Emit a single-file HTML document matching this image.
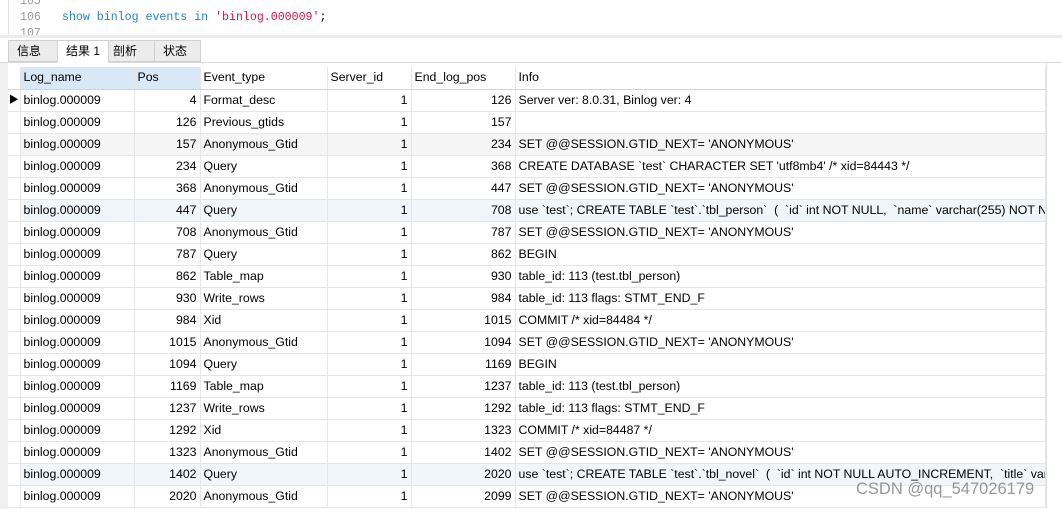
<!DOCTYPE html>
<html><head><meta charset="utf-8"><style>
*{margin:0;padding:0;box-sizing:border-box}
body{width:1062px;height:509px;overflow:hidden;background:#fff;font-family:"Liberation Sans","Noto Sans CJK SC",sans-serif;font-size:12.3px;color:#000;position:relative}
.code{position:absolute;left:0;top:0;width:1062px;height:35px;background:#fff;font-family:"Liberation Mono",monospace;font-size:11.6px}
.ln{position:absolute;left:20px;color:#999}
.gut{position:absolute;left:8px;top:0;width:1px;height:35px;background:#e4e4e4}
.sep{position:absolute;left:0;top:35px;width:1062px;height:3px;background:#ececec}
.tabs{position:absolute;left:0;top:38px;width:1062px;height:25px;background:#fff;border-bottom:1px solid #d8d8d8}
.tab{position:absolute;top:2px;height:22px;background:#ececec;border:1px solid #d0d0d0;font-size:12px;line-height:20px;padding-left:8px}
.tab.a{background:#fff;border-bottom:1px solid #fff;height:23px}
.left{position:absolute;left:0;top:63px;width:8px;height:446px;background:#f0f0f0}
table{position:absolute;left:8px;top:67px;width:1037px;border-collapse:collapse;table-layout:fixed}
td{height:22px;border-right:1px solid #e6e6e6;border-bottom:1px solid #e6e6e6;padding:0 3px;white-space:nowrap;overflow:hidden;line-height:21px}
td.r{text-align:right;padding-right:3px}
tr.h td{background:#fff;border-bottom:1px solid #d4d4d4}
tr.h td.s{background:#d9e8f6}
tr.g td{background:#f5f5f5}
tr.b td{background:#f1f6fb}
td.i{border-right:1px solid #e6e6e6;background:#fff !important;padding:0}
</style></head><body>
<div class="code">
<div class="gut"></div>
<div class="ln" style="top:-5px">105</div>
<div class="ln" style="top:11px">106</div>
<div class="ln" style="top:27px">107</div>
<div style="position:absolute;left:62px;top:11px"><span style="color:#1f7fd8">show binlog events in</span> <span style="color:#e0103c">'binlog.000009'</span>;</div>
</div>
<div class="sep"></div>
<div class="tabs">
<div class="tab" style="left:8px;width:50px">信息</div>
<div class="tab a" style="left:57px;width:52px">结果 1</div>
<div class="tab" style="left:108px;width:47px;padding-left:4px">剖析</div>
<div class="tab" style="left:154px;width:47px">状态</div>
</div>
<div class="left"></div>
<table>
<colgroup><col style="width:12px"><col style="width:114px"><col style="width:66px"><col style="width:127px"><col style="width:84px"><col style="width:104px"><col style="width:530px"></colgroup>
<tr class="h"><td class="i"></td><td class="s">Log_name</td><td class="s">Pos</td><td>Event_type</td><td>Server_id</td><td>End_log_pos</td><td>Info</td></tr>
<tr><td class="i" style="font-size:10px;text-align:center">&#9654;</td><td>binlog.000009</td><td class="r">4</td><td>Format_desc</td><td class="r">1</td><td class="r">126</td><td>Server ver: 8.0.31, Binlog ver: 4</td></tr>
<tr><td class="i"></td><td>binlog.000009</td><td class="r">126</td><td>Previous_gtids</td><td class="r">1</td><td class="r">157</td><td></td></tr>
<tr class="g"><td class="i"></td><td>binlog.000009</td><td class="r">157</td><td>Anonymous_Gtid</td><td class="r">1</td><td class="r">234</td><td>SET @@SESSION.GTID_NEXT= 'ANONYMOUS'</td></tr>
<tr><td class="i"></td><td>binlog.000009</td><td class="r">234</td><td>Query</td><td class="r">1</td><td class="r">368</td><td>CREATE DATABASE `test` CHARACTER SET 'utf8mb4' /* xid=84443 */</td></tr>
<tr><td class="i"></td><td>binlog.000009</td><td class="r">368</td><td>Anonymous_Gtid</td><td class="r">1</td><td class="r">447</td><td>SET @@SESSION.GTID_NEXT= 'ANONYMOUS'</td></tr>
<tr class="b"><td class="i"></td><td>binlog.000009</td><td class="r">447</td><td>Query</td><td class="r">1</td><td class="r">708</td><td>use `test`; CREATE TABLE `test`.`tbl_person`&nbsp; (&nbsp; `id` int NOT NULL,&nbsp; `name` varchar(255) NOT NULL</td></tr>
<tr><td class="i"></td><td>binlog.000009</td><td class="r">708</td><td>Anonymous_Gtid</td><td class="r">1</td><td class="r">787</td><td>SET @@SESSION.GTID_NEXT= 'ANONYMOUS'</td></tr>
<tr><td class="i"></td><td>binlog.000009</td><td class="r">787</td><td>Query</td><td class="r">1</td><td class="r">862</td><td>BEGIN</td></tr>
<tr><td class="i"></td><td>binlog.000009</td><td class="r">862</td><td>Table_map</td><td class="r">1</td><td class="r">930</td><td>table_id: 113 (test.tbl_person)</td></tr>
<tr><td class="i"></td><td>binlog.000009</td><td class="r">930</td><td>Write_rows</td><td class="r">1</td><td class="r">984</td><td>table_id: 113 flags: STMT_END_F</td></tr>
<tr><td class="i"></td><td>binlog.000009</td><td class="r">984</td><td>Xid</td><td class="r">1</td><td class="r">1015</td><td>COMMIT /* xid=84484 */</td></tr>
<tr><td class="i"></td><td>binlog.000009</td><td class="r">1015</td><td>Anonymous_Gtid</td><td class="r">1</td><td class="r">1094</td><td>SET @@SESSION.GTID_NEXT= 'ANONYMOUS'</td></tr>
<tr><td class="i"></td><td>binlog.000009</td><td class="r">1094</td><td>Query</td><td class="r">1</td><td class="r">1169</td><td>BEGIN</td></tr>
<tr><td class="i"></td><td>binlog.000009</td><td class="r">1169</td><td>Table_map</td><td class="r">1</td><td class="r">1237</td><td>table_id: 113 (test.tbl_person)</td></tr>
<tr><td class="i"></td><td>binlog.000009</td><td class="r">1237</td><td>Write_rows</td><td class="r">1</td><td class="r">1292</td><td>table_id: 113 flags: STMT_END_F</td></tr>
<tr><td class="i"></td><td>binlog.000009</td><td class="r">1292</td><td>Xid</td><td class="r">1</td><td class="r">1323</td><td>COMMIT /* xid=84487 */</td></tr>
<tr><td class="i"></td><td>binlog.000009</td><td class="r">1323</td><td>Anonymous_Gtid</td><td class="r">1</td><td class="r">1402</td><td>SET @@SESSION.GTID_NEXT= 'ANONYMOUS'</td></tr>
<tr class="b"><td class="i"></td><td>binlog.000009</td><td class="r">1402</td><td>Query</td><td class="r">1</td><td class="r">2020</td><td>use `test`; CREATE TABLE `test`.`tbl_novel`&nbsp; (&nbsp; `id` int NOT NULL AUTO_INCREMENT,&nbsp; `title` varchar</td></tr>
<tr><td class="i"></td><td>binlog.000009</td><td class="r">2020</td><td>Anonymous_Gtid</td><td class="r">1</td><td class="r">2099</td><td>SET @@SESSION.GTID_NEXT= 'ANONYMOUS'</td></tr>
</table>
<div style="position:absolute;left:1046px;top:63px;width:16px;height:446px;background:#fff;border-left:1px solid #e0e0e0"></div>
<div style="position:absolute;left:856px;top:480px;font-size:16.5px;color:#8c8c8c;opacity:.9">CSDN @qq_547026179</div>
</body></html>
